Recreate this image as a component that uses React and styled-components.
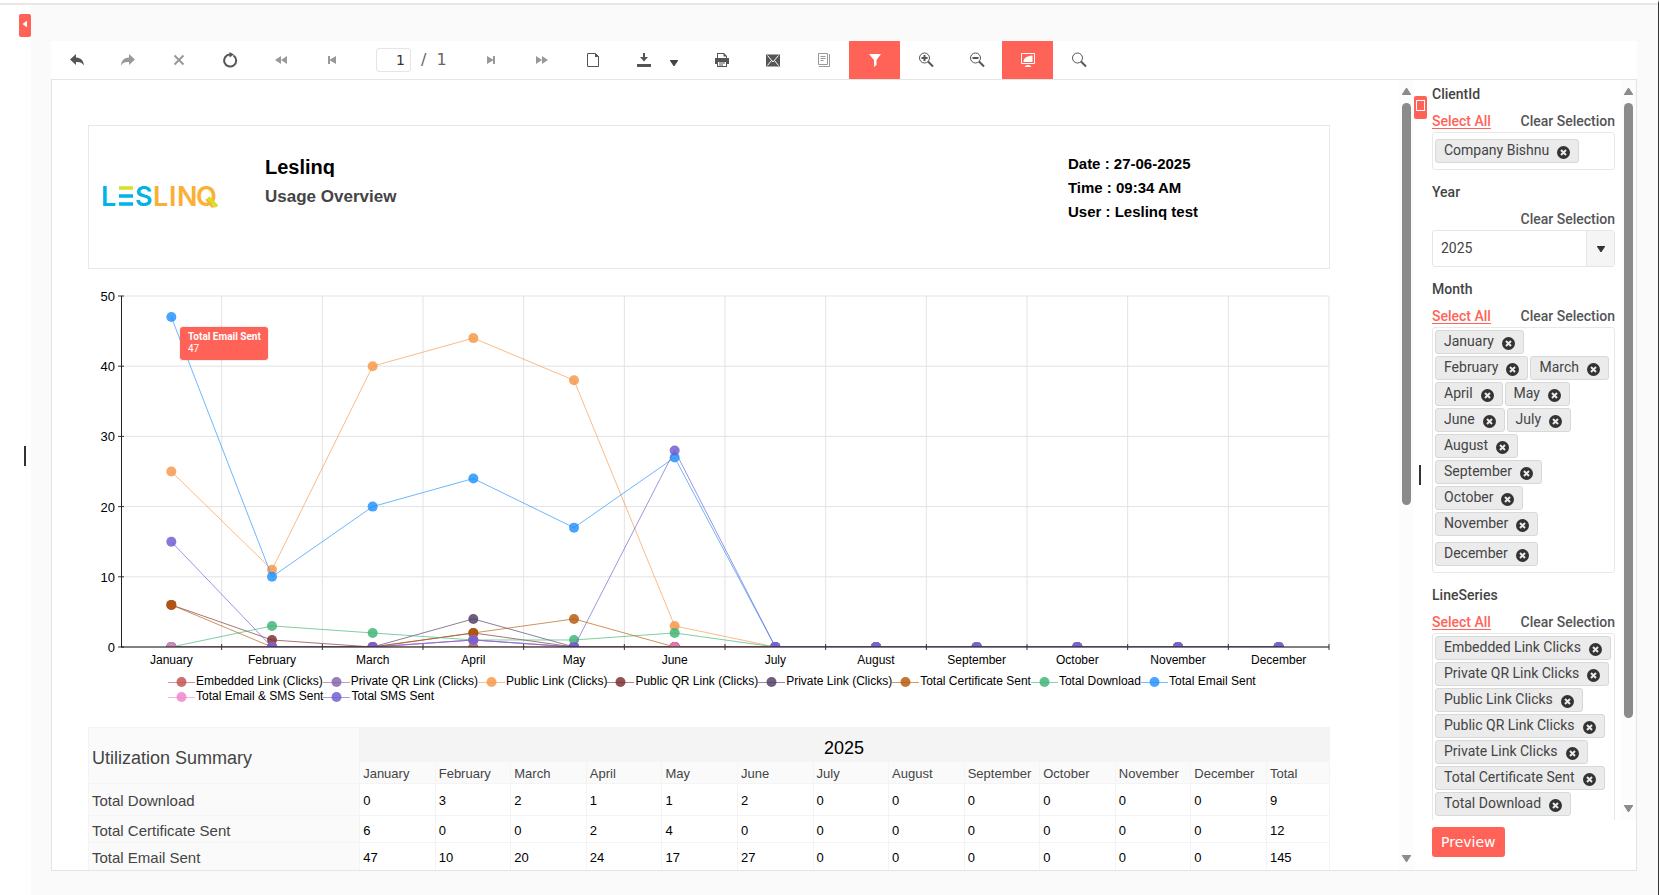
import React, {useState} from 'react';
import styled, {createGlobalStyle, css} from 'styled-components';

const GlobalStyle = createGlobalStyle`
  * {
    box-sizing: border-box;
  }
  body {
    margin: 0;
    background: #fafafa;
    font-family: Roboto, sans-serif;
    font-size: 14px;
    line-height: 20px;
    color: #444;
  }
  button, input, select {
    font: inherit;
    color: inherit;
  }
`
const Page = styled.div`
  display: flex;
  height: 100vh;
  overflow: hidden;
  border-top: 3px solid #fff;
  border-right: 1px solid #333;
`
const MapPane = styled.aside`
  display: flex;
  flex-direction: column;
  align-items: flex-end;
  width: 31px;
  border-top: 2px solid #e8e8e8;
  padding: 9px 0 20px;
  background: #fff;
`
const CollapseBtn = styled.button`
  display: flex;
  justify-content: center;
  width: 12px;
  height: 23px;
  padding: 7px 0 0;
  border: none;
  border-radius: 2px;
  background: #ff6358;
  cursor: pointer;
`
const Handle = styled.div`
  width: 2px;
  height: 20px;
  margin: auto 5px;
  background: #333;
`
const Main = styled.main`
  display: flex;
  flex: 1;
  min-width: 0;
  border-top: 2px solid #e8e8e8;
  padding: 36px 21px 24px 20px;
`
const Viewer = styled.section`
  display: flex;
  flex-direction: column;
  flex: 1;
  min-width: 0;
  background: #fff;
`
const Toolbar = styled.div`
  display: flex;
  align-items: stretch;
  height: 38px;
`
const ToolButton = styled.button`
  display: flex;
  align-items: center;
  justify-content: center;
  width: 51px;
  padding: 0;
  border: none;
  background: ${props => props.$active ? '#ff6358' : 'transparent'};
  color: ${props => props.$active ? '#fff' : '#555'};
  cursor: pointer;

  &:disabled {
    color: #999;
    cursor: default;
  }
`
const CaretButton = styled(ToolButton)`
  width: 27px;
  padding-top: 6px;
  padding-right: 18px;
`
const Pager = styled.label`
  display: flex;
  align-items: center;
  gap: 10px;
  width: 108px;
  padding-left: 19px;
  font-family: "DejaVu Sans", sans-serif;
  font-size: 16px;
  color: #666;
`
const PageInput = styled.input`
  width: 35px;
  height: 24px;
  padding: 0 5px;
  border: 1px solid #e5e5e5;
  border-radius: 3px;
  outline: none;
  text-align: right;
  font-size: 14px;
  color: #333;
`
const Body = styled.div`
  display: flex;
  flex: 1;
  min-height: 0;
  border: 1px solid #e5e5e5;
`
const Report = styled.div`
  flex: 1;
  min-width: 0;
  overflow: hidden;
  padding: 45px 69px 0 36px;
  font-family: "Liberation Sans", Arial, sans-serif;
`
const Track = styled.div`
  display: flex;
  flex-direction: column;
  align-items: center;
  width: 15px;
  padding: 8px 0;
  background: #fcfcfc;
`
const Thumb = styled.div`
  width: 9px;
  height: ${props => props.$size}%;
  margin-top: 8px;
  margin-bottom: auto;
  border-radius: 5px;
  background: #8b8b8b;
`
const ReportHeader = styled.header`
  display: flex;
  height: 144px;
  border: 1px solid #e8e8e8;
  padding: 29px 131px 0 13px;
`
const LogoSvg = styled.svg`
  width: 118px;
  height: 26px;
  margin-top: 30px;
  overflow: visible;
`
const Titles = styled.div`
  flex: 1;
  margin-left: 45px;
`
const Title = styled.h1`
  height: 22px;
  margin: 0;
  overflow: hidden;
  font-size: 20px;
  line-height: 25px;
  color: #000;
`
const Subtitle = styled.h2`
  margin: 10px 0 0;
  font-size: 17px;
  line-height: 20px;
  color: #444;
`
const Meta = styled.div`
  font-weight: bold;
  font-size: 15px;
  line-height: 18px;
  color: #000;
`
const MetaLine = styled.p`
  height: 17px;
  margin: 0 0 7px;
  overflow: hidden;
`
const ChartBox = styled.figure`
  position: relative;
  margin: 17px 0 0;
`
const ChartSvg = styled.svg`
  display: block;
  width: 100%;
  font-size: 12px;
`
const Tooltip = styled.div`
  position: absolute;
  left: 92px;
  top: 41px;
  padding: 4px 7px 5px 8px;
  border-radius: 3px;
  background: #ff6358;
  box-shadow: 0 0 0 1px rgba(0, 0, 0, 0.06);
  font-family: Roboto, sans-serif;
  font-size: 10px;
  line-height: 12px;
  color: #fff;
`
const Legend = styled.ul`
  display: flex;
  flex-wrap: wrap;
  margin: 0 60px 0 80px;
  padding: 0;
  list-style: none;
  font-size: 12px;
  line-height: 15px;
  color: #000;
`
const LegendItem = styled.li`
  display: flex;
  align-items: center;
  gap: 1px;
  white-space: nowrap;
`
const SummaryTable = styled.table`
  width: 100%;
  margin-top: 23px;
  border-collapse: collapse;
  table-layout: fixed;
  color: #000;
  font-size: 13px;
  line-height: 15px;
`
const cell = css`
  padding: 0 4px 0 3px;
  border: 1px solid #f4f4f4;
  text-align: left;
  font-weight: normal;
  white-space: nowrap;
`
const Td = styled.td`
  ${cell}
  height: ${props => props.$height}px;
  padding-top: 2px;
`
const Corner = styled.th`
  ${cell}
  background: #fafafa;
  font-size: 18px;
  line-height: 22px;
  color: #444;
  padding-top: 4px;
`
const YearHead = styled.th`
  ${cell}
  height: 34px;
  padding-top: 8px;
  background: #f4f4f4;
  text-align: center;
  font-size: 18px;
`
const MonthHead = styled.th`
  ${cell}
  height: 22px;
  padding-top: 2px;
  background: #fafafa;
  color: #444;
`
const RowHead = styled.th`
  ${cell}
  padding-top: 2px;
  background: #fafafa;
  font-size: 15px;
  color: #444;
`
const Splitter = styled.div`
  display: flex;
  flex-direction: column;
  align-items: flex-start;
  width: 14px;
  padding: 16px 0 40px;
`
const SplitBtn = styled(CollapseBtn)`
  width: 13px;
  padding-top: 4px;
`
const Square = styled.span`
  width: 9px;
  height: 11px;
  border: 1px solid #fff;
`
const Params = styled.aside`
  display: flex;
  flex-direction: column;
  width: 208px;
`
const ParamScroll = styled.div`
  display: flex;
  flex: 1;
  min-height: 0;
`
const ParamList = styled.div`
  flex: 1;
  overflow: hidden;
  padding: 4px 6px 0 4px;
`
const Group = styled.div`
  margin-bottom: 12px;
`
const GroupLabel = styled.label`
  display: block;
  margin-bottom: 7px;
  font-weight: 500;
`
const Links = styled.div`
  display: flex;
  justify-content: flex-end;
  margin-bottom: 1px;
  font-weight: 500;
`
const SelectAll = styled.a`
  margin-right: auto;
  color: #ff6358;
  text-underline-offset: 2px;
`
const Clear = styled.a`
  color: #555;
  text-decoration: none;
`
const Tokens = styled.div`
  display: flex;
  flex-wrap: wrap;
  gap: 2px;
  padding: 2px;
  border: 1px solid #e8e8e8;
  border-radius: 3px;
`
const Token = styled.span`
  display: flex;
  align-items: center;
  gap: 8px;
  height: 24px;
  padding: 0 8px 2px;
  border: 1px solid #d8d8d8;
  border-radius: 3px;
  background: #ebebeb;
  white-space: nowrap;

  &:last-child {
    margin: 4px 0;
  }
`
const RemoveBtn = styled.button`
  display: flex;
  padding: 4px 0 0;
  border: none;
  background: none;
  cursor: pointer;
`
const SelectBox = styled.div`
  display: flex;
  height: 37px;
  border: 1px solid #e5e5e5;
  border-radius: 3px;
`
const Select = styled.select`
  flex: 1;
  padding: 0 8px 2px;
  border: none;
  outline: none;
  appearance: none;
  background: transparent;
`
const SelectArrow = styled.span`
  display: flex;
  align-items: center;
  justify-content: center;
  width: 28px;
  border-left: 1px solid #e5e5e5;
  background: #f5f5f5;
`
const Footer = styled.div`
  padding: 7px 4px 13px;
`
const PreviewBtn = styled.button`
  height: 30px;
  padding: 0 9px;
  border: none;
  border-radius: 3px;
  background: #ff6358;
  font-family: "DejaVu Sans", sans-serif;
  color: #fff;
  cursor: pointer;
`

const MONTHS = ['January', 'February', 'March', 'April', 'May', 'June', 'July', 'August', 'September', 'October', 'November', 'December']

const SERIES = [
  {name: 'Embedded Link (Clicks)', color: '#c0504d', data: [0, 0, 0, 0, 0, 0]},
  {name: 'Private QR Link (Clicks)', color: '#8560a8', data: [0, 0, 0, 1, 0, 0]},
  {name: 'Public Link (Clicks)', color: '#f79646', data: [25, 11, 40, 44, 38, 3]},
  {name: 'Public QR Link (Clicks)', color: '#772c2a', data: [6, 1, 0, 2, 0, 0]},
  {name: 'Private Link (Clicks)', color: '#4d3b62', data: [0, 0, 0, 4, 0, 0]},
  {name: 'Total Certificate Sent', color: '#b65708', data: [6, 0, 0, 2, 4, 0]},
  {name: 'Total Download', color: '#3cb371', data: [0, 3, 2, 1, 1, 2]},
  {name: 'Total Email Sent', color: '#1e90ff', data: [47, 10, 20, 24, 17, 27]},
  {name: 'Total Email & SMS Sent', color: '#ee82d0', data: [0, 0, 0, 1, 0, 0]},
  {name: 'Total SMS Sent', color: '#6a5acd', data: [15, 0, 0, 1, 0, 28]},
]

const ROWS = [
  {name: 'Total Download', height: 32, values: [0, 3, 2, 1, 1, 2]},
  {name: 'Total Certificate Sent', height: 27, values: [6, 0, 0, 2, 4, 0]},
  {name: 'Total Email Sent', height: 28, values: [47, 10, 20, 24, 17, 27]},
]

const LINE_SERIES = ['Embedded Link Clicks', 'Private QR Link Clicks', 'Public Link Clicks', 'Public QR Link Clicks', 'Private Link Clicks', 'Total Certificate Sent', 'Total Download', 'Total Email Sent']

const ICONS = {
  undo: <path d="M7 2v3.500c5 .2 7.500 3 8 8-2-2.800-4-3.800-8-3.500V13L1 7.500z" fill="currentColor" />,
  redo: <path d="M9 2v3.500C4 5.700 1.500 8.500 1 13.500c2-2.800 4-3.800 8-3.500V13l6-5.500z" fill="currentColor" />,
  close: <path d="M3.500 3.500l9 9m0-9l-9 9" stroke="currentColor" strokeWidth="2" />,
  refresh: <g><path d="M11.500 3.500A6 6 0 1 1 8 2.500" fill="none" stroke="currentColor" strokeWidth="2" /><path d="M7.500 0L12 2.500 7.500 5.500z" fill="currentColor" /></g>,
  rewind: <path d="M8 4v8L2 8zM14 4v8L8 8z" fill="currentColor" />,
  first: <path d="M4 4h2v3.500L12 4v8L6 8.500V12H4z" fill="currentColor" />,
  last: <path d="M12 4h-2v3.500L4 4v8l6-3.500V12h2z" fill="currentColor" />,
  forward: <path d="M8 4v8l6-4zM2 4v8l6-4z" fill="currentColor" />,
  page: <g><path d="M2.500 1.500h8l3 3v10h-11z" fill="none" stroke="currentColor" /><path d="M10 1l4 4h-4z" fill="currentColor" /></g>,
  download: <path d="M7 1h2v4h3L8 9.500 4 5h3zM1 12h14v3H1z" fill="currentColor" />,
  print: <g fill="currentColor"><path d="M3 6V1h7l3 3v2h-1V4.500H9.500V2H4v4z" /><path d="M1 6h14v6h-2V9H3v3H1z" /><path d="M3 9h10v6H3zM4 10v4h8v-4z" fillRule="evenodd" /><path d="M5 10.500h6v1H5zM5 12.500h4v1H5z" /></g>,
  mail: <g><path d="M1 2.500h14v12H1z" fill="currentColor" /><path d="M2.500 3.500L8 10l5.500-6.500M2.500 13.500l4-5M13.500 13.500l-4-5" fill="none" stroke="#fff" /></g>,
  sheet: <g fill="none" stroke="currentColor"><path d="M2.500 1.500h9v11h-9z" /><path d="M13.500 2v12.500H3M4.500 4.500h5M4.500 6.500h5M4.500 8.500h3" /></g>,
  filter: <path d="M2 2h12L9.500 8v5L7 15V8z" fill="currentColor" />,
  zoomIn: <g><circle cx="6.500" cy="6" r="5" fill="none" stroke="currentColor" /><path d="M10 9.500l5 5" stroke="currentColor" strokeWidth="2" /><path d="M3.500 6h6M6.500 3v6" stroke="currentColor" strokeWidth="2" /></g>,
  zoomOut: <g><circle cx="6.500" cy="6" r="5" fill="none" stroke="currentColor" /><path d="M10 9.500l5 5" stroke="currentColor" strokeWidth="2" /><path d="M3.500 6h6" stroke="currentColor" strokeWidth="2" /></g>,
  screen: <g><path d="M1.500 1.500h13v10h-13z" fill="none" stroke="currentColor" /><path d="M3.500 10c0-4 3-6 9-6.500V10zM4.500 15l2-2h3l2 2z" fill="currentColor" /></g>,
  search: <g><circle cx="6.500" cy="6" r="5" fill="none" stroke="currentColor" /><path d="M10 9.500l5 5" stroke="currentColor" strokeWidth="2" /></g>,
}

const Icon = ({name}) => (
  <svg width="16" height="16" viewBox="0 0 16 16" aria-hidden="true">{ICONS[name]}</svg>
)

const Triangle = ({dir, color = '#8b8b8b', width = 9, height = 7}) => {
  const points = {up: '0,7 4.500,0 9,7', down: '0,0 9,0 4.500,7', left: '9,0 9,7 0,3.500'}
  return (
    <svg width={width} height={height} viewBox="0 0 9 7" preserveAspectRatio="none" aria-hidden="true">
      <polygon points={points[dir]} fill={color} stroke={color} strokeLinejoin="round" />
    </svg>
  )
}

const Tool = ({icon, label, ...rest}) => (
  <ToolButton type="button" aria-label={label} title={label} {...rest}><Icon name={icon} /></ToolButton>
)

const Scrollbar = ({size}) => (
  <Track>
    <Triangle dir="up" />
    <Thumb $size={size} />
    <Triangle dir="down" />
  </Track>
)

const Logo = () => (
  <LogoSvg viewBox="0 0 118 26" role="img" aria-label="Leslinq">
    <g fontFamily="Inter, sans-serif" fontSize="27" fontWeight="600">
      <text x="-1" y="21" fill="#00b4e6">L</text>
      <text x="33" y="21" fill="#00b4e6">S</text>
      <text x="51" y="21" fill="#fbb034">L</text>
      <text x="67" y="21" fill="#fbb034">I</text>
      <text x="75" y="21" fill="#fbb034">N</text>
      <text x="94" y="21" fill="#fbb034">Q</text>
    </g>
    <path d="M17 3h14" stroke="#d7df23" strokeWidth="3.500" />
    <path d="M17 11h14M17 19h14" stroke="#00b4e6" strokeWidth="3.500" />
    <path d="M106 12.500l9 9" stroke="#d7df23" strokeWidth="3.500" />
  </LogoSvg>
)

const LEFT = 33
const TOP = 10
const STEP = 1208 / 12
const UNIT = 351 / 50
const px = i => LEFT + STEP * (i + 0.5)
const py = v => TOP + (50 - v) * UNIT

function LineChart() {
  return (
    <ChartBox>
      <ChartSvg viewBox="0 0 1242 388" role="img" aria-label="Usage by month">
        <clipPath id="plot"><rect x={LEFT} y="0" width="1209" height={py(0)} /></clipPath>
        {[0, 10, 20, 30, 40, 50].map(v => (
          <g key={v}>
            <path d={`M${LEFT} ${py(v)}H1241`} stroke="#e3e3e3" />
            <path d={`M${LEFT - 3} ${py(v)}h6`} stroke="#333" />
            <text x="27" y={py(v) + 5} textAnchor="end" fontSize="13">{v}</text>
          </g>
        ))}
        {MONTHS.map((month, i) => (
          <g key={month}>
            <path d={`M${LEFT + STEP * (i + 1)} ${TOP}V${py(0)}`} stroke="#e3e3e3" />
            <text x={px(i)} y={py(0) + 17} textAnchor="middle">{month}</text>
          </g>
        ))}
        <path d={`M${LEFT + 0.5} ${TOP}V${py(0)}`} stroke="#222" />
        <g clipPath="url(#plot)">
          {SERIES.map(s => {
            const values = MONTHS.map((_, i) => s.data[i] || 0)
            return (
              <g key={s.name}>
                <polyline points={values.map((v, i) => `${px(i)},${py(v)}`).join(' ')} fill="none" stroke={s.color} strokeOpacity="0.65" />
                {values.map((v, i) => <circle key={i} cx={px(i)} cy={py(v)} r="5" fill={s.color} fillOpacity="0.82" />)}
              </g>
            )
          })}
        </g>
        <path d={`M${LEFT} ${py(0)}H1241`} stroke="#111" />
        {MONTHS.map((month, i) => <path key={month} d={`M${LEFT + STEP * (i + 1)} ${py(0) - 3}v6`} stroke="#333" />)}
      </ChartSvg>
      <Tooltip role="tooltip"><b>Total Email Sent</b><br />47</Tooltip>
      <Legend>
        {SERIES.map(s => (
          <LegendItem key={s.name}>
            <svg width="27" height="12" aria-hidden="true">
              <path d="M0 6.500h27" stroke={s.color} strokeOpacity="0.6" />
              <circle cx="13.500" cy="6" r="5" fill={s.color} fillOpacity="0.82" />
            </svg>
            {s.name}
          </LegendItem>
        ))}
      </Legend>
    </ChartBox>
  )
}

function Summary() {
  return (
    <SummaryTable>
      <colgroup>
        <col width="21.85%" />
        {MONTHS.map(m => <col key={m} width="6.09%" />)}
        <col />
      </colgroup>
      <thead>
        <tr>
          <Corner rowSpan={2}>Utilization Summary</Corner>
          <YearHead colSpan={13}>2025</YearHead>
        </tr>
        <tr>
          {[...MONTHS, 'Total'].map(m => <MonthHead key={m}>{m}</MonthHead>)}
        </tr>
      </thead>
      <tbody>
        {ROWS.map(row => (
          <tr key={row.name}>
            <RowHead scope="row">{row.name}</RowHead>
            {MONTHS.map((m, i) => <Td key={m} $height={row.height}>{row.values[i] || 0}</Td>)}
            <Td>{row.values.reduce((a, b) => a + b, 0)}</Td>
          </tr>
        ))}
      </tbody>
    </SummaryTable>
  )
}

function TokenGroup({label, initial}) {
  const [items, setItems] = useState(initial)
  return (
    <Group role="group" aria-label={label}>
      <GroupLabel as="div">{label}</GroupLabel>
      <Links>
        <SelectAll href="#all" onClick={() => setItems(initial)}>Select All</SelectAll>
        <Clear href="#clear" onClick={() => setItems([])}>Clear Selection</Clear>
      </Links>
      <Tokens>
        {items.map(item => (
          <Token key={item}>
            {item}
            <RemoveBtn type="button" aria-label={`Remove ${item}`} onClick={() => setItems(items.filter(x => x !== item))}>
              <svg width="13" height="13" viewBox="0 0 13 13">
                <circle cx="6.500" cy="6.500" r="6.500" fill="#333" />
                <path d="M4 4l5 5m0-5L4 9" stroke="#ebebeb" strokeWidth="2" />
              </svg>
            </RemoveBtn>
          </Token>
        ))}
      </Tokens>
    </Group>
  )
}

function App() {
  const [page, setPage] = useState('1')
  return (
    <Page>
      <GlobalStyle />
      <MapPane>
        <CollapseBtn type="button" aria-label="Toggle document map"><Triangle dir="left" color="#fff" width={4} height={6} /></CollapseBtn>
        <Handle />
      </MapPane>
      <Main>
        <Viewer>
          <Toolbar role="toolbar">
            <Tool icon="undo" label="Back" />
            <Tool icon="redo" label="Forward" disabled />
            <Tool icon="close" label="Stop" disabled />
            <Tool icon="refresh" label="Refresh" />
            <Tool icon="rewind" label="First page" disabled />
            <Tool icon="first" label="Previous page" disabled />
            <Pager>
              <PageInput aria-label="Page number" value={page} onChange={e => setPage(e.target.value)} />
              <span>/</span>
              <span>1</span>
            </Pager>
            <Tool icon="last" label="Next page" disabled />
            <Tool icon="forward" label="Last page" disabled />
            <Tool icon="page" label="Page layout" />
            <Tool icon="download" label="Export" />
            <CaretButton type="button" aria-label="Export formats"><Triangle dir="down" color="#444" width={8} height={6} /></CaretButton>
            <Tool icon="print" label="Print" />
            <Tool icon="mail" label="Send email" />
            <Tool icon="sheet" label="Document map" disabled />
            <Tool icon="filter" label="Parameters" $active />
            <Tool icon="zoomIn" label="Zoom in" />
            <Tool icon="zoomOut" label="Zoom out" />
            <Tool icon="screen" label="Print preview" $active />
            <Tool icon="search" label="Search" />
          </Toolbar>
          <Body>
            <Report>
              <ReportHeader>
                <Logo />
                <Titles>
                  <Title>Leslinq</Title>
                  <Subtitle>Usage Overview</Subtitle>
                </Titles>
                <Meta>
                  <MetaLine>Date : 27-06-2025</MetaLine>
                  <MetaLine>Time : 09:34 AM</MetaLine>
                  <MetaLine>User : Leslinq test</MetaLine>
                </Meta>
              </ReportHeader>
              <LineChart />
              <Summary />
            </Report>
            <Scrollbar size={52} />
            <Splitter>
              <SplitBtn type="button" aria-label="Toggle parameters"><Square /></SplitBtn>
              <Handle />
            </Splitter>
            <Params>
              <ParamScroll>
                <ParamList>
                  <TokenGroup label="ClientId" initial={['Company Bishnu']} />
                  <Group>
                    <GroupLabel htmlFor="year">Year</GroupLabel>
                    <Links><Clear href="#clear">Clear Selection</Clear></Links>
                    <SelectBox>
                      <Select id="year" defaultValue="2025">
                        <option>2025</option>
                        <option>2024</option>
                      </Select>
                      <SelectArrow><Triangle dir="down" color="#333" width={8} height={6} /></SelectArrow>
                    </SelectBox>
                  </Group>
                  <TokenGroup label="Month" initial={MONTHS} />
                  <TokenGroup label="LineSeries" initial={LINE_SERIES} />
                </ParamList>
                <Scrollbar size={85} />
              </ParamScroll>
              <Footer><PreviewBtn type="button">Preview</PreviewBtn></Footer>
            </Params>
          </Body>
        </Viewer>
      </Main>
    </Page>
  )
}

export default App;
